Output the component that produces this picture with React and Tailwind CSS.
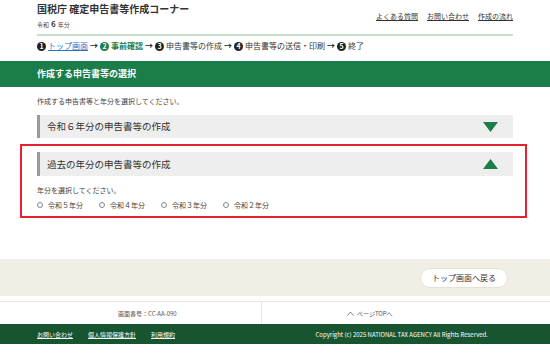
import React from "react";

const Num = ({ n, green }) => (
  <span
    className={`inline-flex items-center justify-center w-[9px] h-[9px] rounded-full text-white text-[7px] font-bold leading-none mr-[2px] ${
      green ? "bg-[#1b7d4a]" : "bg-[#222]"
    }`}
  >
    {n}
  </span>
);

const Arrow = () => <span className="mx-[2px] font-bold text-[#222]">→</span>;

const Triangle = ({ up }) => (
  <svg width="15" height="10" viewBox="0 0 15 10">
    <polygon points={up ? "7.5,0 15,10 0,10" : "0,0 15,0 7.5,10"} fill="#1b7d4a" />
  </svg>
);

const Accordion = ({ title, up }) => (
  <div className="flex items-center justify-between h-full bg-[#eeeeee] border-l-[3px] border-[#9a9a9a] pl-[7px] pr-[15px]">
    <span className="text-[9.5px] text-[#333]">{title}</span>
    <Triangle up={up} />
  </div>
);

const years = ["令和５年分", "令和４年分", "令和３年分", "令和２年分"];

export default function App() {
  return (
    <div
      className="w-full min-h-[364px] bg-white text-[#333]"
      style={{ fontFamily: '"Noto Sans CJK JP", "Noto Sans", sans-serif' }}
    >
      {/* header */}
      <div className="w-[476px] mx-auto pt-[3px]">
        <div className="flex justify-between items-start">
          <div>
            <div className="text-[10px] font-bold leading-[12px] text-[#333]">国税庁 確定申告書等作成コーナー</div>
            <div className="mt-[4px] h-[10px] flex items-baseline text-[6px] leading-[10px] text-[#444]">
              令和<span className="mx-[2px] text-[8px] font-bold">6</span>年分
            </div>
          </div>
          <div className="mt-[8px] flex gap-[9px] text-[7px] leading-[10px] text-[#333]">
            <span className="underline">よくある質問</span>
            <span className="underline">お問い合わせ</span>
            <span className="underline">作成の流れ</span>
          </div>
        </div>
        <div className="mt-[5px] h-[2px] bg-[#c4e0cb]" />
        <div className="mt-[4px] h-[12px] flex items-center text-[8px] leading-[12px] text-[#333]">
          <Num n="1" />
          <span className="underline text-[#2a73c5]">トップ画面</span>
          <Arrow />
          <Num n="2" green />
          <span className="font-bold text-[#1b7d4a]">事前確認</span>
          <Arrow />
          <Num n="3" />
          <span>申告書等の作成</span>
          <Arrow />
          <Num n="4" />
          <span>申告書等の送信・印刷</span>
          <Arrow />
          <Num n="5" />
          <span>終了</span>
        </div>
      </div>

      {/* section bar */}
      <div className="mt-[9px] h-[26px] bg-[#1b7d4a] flex items-center">
        <div className="w-[476px] mx-auto text-[9px] font-bold text-white">作成する申告書等の選択</div>
      </div>

      {/* main */}
      <div className="w-[476px] mx-auto">
        <div className="mt-[9px] text-[7px] leading-[10px] text-[#444]">作成する申告書等と年分を選択してください。</div>
        <div className="mt-[9px] h-[23px]">
          <Accordion title="令和６年分の申告書等の作成" />
        </div>
      </div>

      <div className="mt-[6px] ml-[20px] w-[507px] border-2 border-[#e5232e] pl-[15px] pr-[12px] pt-[6px] pb-[6px]">
        <div className="h-[24px]">
          <Accordion title="過去の年分の申告書等の作成" up />
        </div>
        <div className="mt-[9px] text-[7px] leading-[10px] text-[#444]">年分を選択してください。</div>
        <div className="mt-[5px] flex h-[10px] items-center">
          {years.map((y) => (
            <label key={y} className="w-[62px] flex items-center text-[7px] leading-[10px] text-[#444]">
              <span className="w-[6px] h-[6px] rounded-full border border-[#888] bg-white mr-[5px]" />
              {y}
            </label>
          ))}
        </div>
      </div>

      {/* back button area */}
      <div className="mt-[41px] h-[37px] bg-[#f1efe5] flex items-center justify-end pr-[42px]">
        <button className="w-[88px] h-[20px] rounded-full bg-white border border-[#e6e2d3] text-[8px] text-[#333]">
          トップ画面へ戻る
        </button>
      </div>

      {/* page info row */}
      <div className="mt-[5px] h-[23px] border-t border-[#e6e6e6] flex text-[6px] text-[#555]">
        <div className="w-[262px] flex items-center pl-[118px] border-r border-[#e6e6e6]">画面番号：CC-AA-090</div>
        <div className="flex-1 flex items-center pl-[85px]">
          <svg width="7" height="5" viewBox="0 0 7 5" className="mr-[3px]">
            <polyline points="0.5,4.5 3.5,1 6.5,4.5" fill="none" stroke="#666" strokeWidth="0.8" />
          </svg>
          ページTOPへ
        </div>
      </div>

      {/* footer */}
      <div className="h-[20px] bg-[#175530] flex items-center justify-between pl-[37px] pr-[62px] text-[6px] text-white">
        <div className="flex gap-[15px]">
          <span className="underline">お問い合わせ</span>
          <span className="underline">個人情報保護方針</span>
          <span className="underline">利用規約</span>
        </div>
        <span>Copyright (c) 2025 NATIONAL TAX AGENCY All Rights Reserved.</span>
      </div>
    </div>
  );
}
